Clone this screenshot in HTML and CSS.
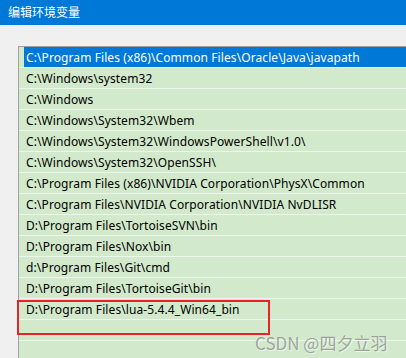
FILE: index.html
```html
<!DOCTYPE html>
<html>
<head>
  <meta charset="UTF-8">
  <title>编辑环境变量</title>
  <link rel="stylesheet" href="styles.css">
</head>
<body>
  <div class="titlebar">编辑环境变量</div>

  <div class="dialog">
    <div class="list">
      <div class="row"><div class="item selected">C:\Program Files (x86)\Common Files\Oracle\Java\javapath</div></div>
      <div class="row"><div class="item">C:\Windows\system32</div></div>
      <div class="row"><div class="item">C:\Windows</div></div>
      <div class="row"><div class="item">C:\Windows\System32\Wbem</div></div>
      <div class="row"><div class="item">C:\Windows\System32\WindowsPowerShell\v1.0\</div></div>
      <div class="row"><div class="item">C:\Windows\System32\OpenSSH\</div></div>
      <div class="row"><div class="item">C:\Program Files (x86)\NVIDIA Corporation\PhysX\Common</div></div>
      <div class="row"><div class="item">C:\Program Files\NVIDIA Corporation\NVIDIA NvDLISR</div></div>
      <div class="row"><div class="item">D:\Program Files\TortoiseSVN\bin</div></div>
      <div class="row"><div class="item">D:\Program Files\Nox\bin</div></div>
      <div class="row"><div class="item">d:\Program Files\Git\cmd</div></div>
      <div class="row"><div class="item">D:\Program Files\TortoiseGit\bin</div></div>
      <div class="row"><div class="item">D:\Program Files\lua-5.4.4_Win64_bin</div></div>
      <div class="row"><div class="item"></div></div>
      <div class="row"><div class="item"></div></div>

      <!-- красная рамка вокруг новой строки -->
      <div class="highlight"></div>
    </div>
  </div>

  <div class="watermark">CSDN @四夕立羽</div>
</body>
</html>
```

FILE: styles.css
```css
body {
  margin: 0;
  width: 406px;
  height: 358px;
  overflow: hidden;
  background-color: #f0f0f0;
  font-family: 'Noto Sans', 'Noto Sans CJK SC', sans-serif;
  font-size: 12px;
  color: #000;
  position: relative;
}

.titlebar {
  height: 25px;
  line-height: 23px;
  padding-left: 8px;
  background-color: #0078d7;
  color: white;
  font-family: 'Noto Sans CJK SC', sans-serif;
  font-size: 12px;
}

.dialog {
  padding: 21px 0 0 18px;
}

.list {
  position: relative;
  border-left: 1px solid #a0a0a0;
  border-top: 1px solid #a0a0a0;
  background-color: #d2eacb;
}

.row {
  height: 20px;
  padding-left: 5px;
  border-bottom: 1px solid #eef5ec;
}

.item {
  height: 20px;
  line-height: 21px;
  padding-left: 2px;
  white-space: nowrap;
  letter-spacing: 0.09px;
}

.item.selected {
  background-color: #0078d7;
  color: white;
}

.highlight {
  position: absolute;
  left: -2px;
  top: 253px;
  width: 249px;
  height: 31px;
  border: 2px solid #e8212b;
}

.watermark {
  position: absolute;
  left: 255px;
  top: 330px;
  font-family: 'Noto Sans CJK SC', sans-serif;
  font-size: 17px;
  color: rgba(130, 130, 130, 0.7);
  text-shadow: 1px 1px 1px rgba(255, 255, 255, 0.6);
}
```
